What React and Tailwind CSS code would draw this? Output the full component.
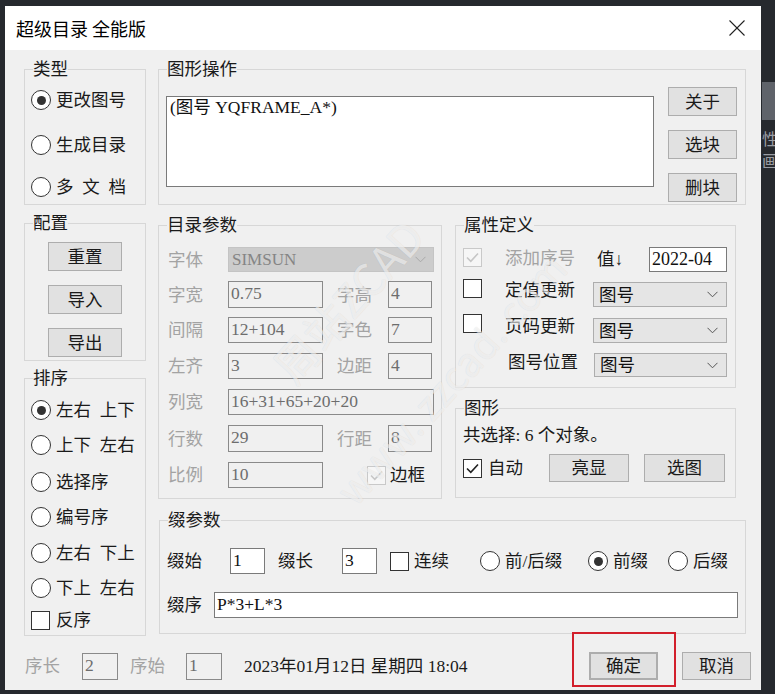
import React from "react";

const Group = ({ title, className = "", children }) => (
  <fieldset className={"border border-[#d7d7d7] min-w-0 " + className}>
    <legend className="ml-[8px] text-[17.5px] leading-[20px] text-[#1a1a1a]">{title}</legend>
    {children}
  </fieldset>
);

const Btn = ({ children, className = "" }) => (
  <div className={"flex items-center justify-center bg-[#e1e1e1] border border-[#adadad] text-[17.5px] leading-[20px] text-[#1a1a1a] shrink-0 " + className}>
    {children}
  </div>
);

const Radio = ({ checked, label, className = "" }) => (
  <div className={"flex items-center h-[20px] " + className}>
    <span className="w-[20px] h-[20px] rounded-full border border-[#333] bg-white flex items-center justify-center shrink-0">
      {checked && <span className="w-[9px] h-[9px] rounded-full bg-[#333]" />}
    </span>
    <span className="ml-[5px] text-[17.5px] leading-[20px] whitespace-nowrap">{label}</span>
  </div>
);

const Check = ({ checked, disabled, className = "" }) => (
  <span
    className={
      (disabled ? "border-[#c9c9c9] bg-[#f6f6f6] " : "border-[#333] bg-white ") +
      "w-[19px] h-[19px] border flex items-center justify-center shrink-0 " +
      className
    }
  >
    {checked && (
      <svg width="15" height="15" viewBox="0 0 15 15">
        <polyline points="2,7.5 5.8,11.3 13,3.5" fill="none" stroke={disabled ? "#c6c6c6" : "#222"} strokeWidth="1.6" />
      </svg>
    )}
  </span>
);

const Field = ({ value, white, className = "" }) => (
  <div
    className={
      "border pl-[2px] pt-[1px] text-[17.5px] leading-[20px] whitespace-nowrap overflow-hidden shrink-0 " +
      (white ? "bg-white border-[#7a7a7a] text-[#111] " : "bg-[#f0f0f0] border-[#8a8a8a] text-[#6d6d6d] ") +
      className
    }
  >
    {value}
  </div>
);

const Chevron = ({ color = "#444" }) => (
  <svg width="11" height="7" viewBox="0 0 11 7">
    <polyline points="0.5,0.8 5.5,5.8 10.5,0.8" fill="none" stroke={color} strokeWidth="1" />
  </svg>
);

const Select = ({ value, className = "" }) => (
  <div className={"flex items-center justify-between bg-[#e5e5e5] border border-[#adadad] pl-[5px] pr-[8px] shrink-0 " + className}>
    <span className="text-[17.5px] leading-[20px] text-[#111]">{value}</span>
    <Chevron color="#555" />
  </div>
);

const Gray = ({ children, className = "" }) => (
  <span className={"text-[17.5px] leading-[20px] text-[#a3a3a3] whitespace-nowrap shrink-0 " + className}>{children}</span>
);

const Label = ({ children, className = "" }) => (
  <span className={"text-[17.5px] leading-[20px] text-[#1a1a1a] whitespace-nowrap shrink-0 " + className}>{children}</span>
);

export default function App() {
  return (
    <div className="relative w-[775px] h-[694px] overflow-hidden bg-[#26292e] pt-[6px] pl-[5px] font-['Liberation_Serif','Noto_Sans_CJK_SC',serif] text-[#1a1a1a]">
      {/* background app bits */}
      <div className="absolute left-[762px] top-[82px] w-[13px] h-[38px] bg-[#5f636a]" />
      <div className="absolute left-[762px] top-[128px] text-[16px] leading-[20px] text-[#9a9da3] font-['Noto_Sans_CJK_SC',sans-serif]">性</div>
      <div className="absolute left-[762px] top-[150px] text-[16px] leading-[20px] text-[#9a9da3] font-['Noto_Sans_CJK_SC',sans-serif]">画</div>

      <div className="w-[756px] h-[684px] flex flex-col bg-[#f0f0f0]">
        {/* title bar */}
        <div className="h-[44px] bg-white flex items-center justify-between pl-[11px] pr-[16px] shrink-0">
          <span className="font-['Noto_Sans_CJK_SC',sans-serif] text-[18px] leading-[24px] text-black">超级目录 全能版</span>
          <svg width="16" height="16" viewBox="0 0 16 16">
            <line x1="0.5" y1="0.5" x2="15.5" y2="15.5" stroke="#222" strokeWidth="1.1" />
            <line x1="15.5" y1="0.5" x2="0.5" y2="15.5" stroke="#222" strokeWidth="1.1" />
          </svg>
        </div>

        {/* body */}
        <div className="flex-1 flex flex-col">
          <div className="flex pl-[19px] pt-[9px]">
            {/* left column */}
            <div className="w-[122px] flex flex-col shrink-0">
              <Group title="类型" className="h-[146px]">
                <div className="flex flex-col pl-[6px]">
                  <Radio checked label="更改图号" className="mt-[11px]" />
                  <Radio label="生成目录" className="mt-[25px]" />
                  <Radio label={"多\u2002文\u2002档"} className="mt-[22px]" />
                </div>
              </Group>
              <Group title="配置" className="h-[148px] mt-[8px]">
                <div className="flex flex-col pl-[23px]">
                  <Btn className="w-[74px] h-[29px] mt-[9px]">重置</Btn>
                  <Btn className="w-[74px] h-[29px] mt-[14px]">导入</Btn>
                  <Btn className="w-[74px] h-[29px] mt-[14px]">导出</Btn>
                </div>
              </Group>
              <Group title="排序" className="h-[268px] mt-[7px]">
                <div className="flex flex-col pl-[6px]">
                  <Radio checked label={"左右\u2002上下"} className="mt-[12px]" />
                  <Radio label={"上下\u2002左右"} className="mt-[15px]" />
                  <Radio label="选择序" className="mt-[17px]" />
                  <Radio label="编号序" className="mt-[15px]" />
                  <Radio label={"左右\u2002下上"} className="mt-[16px]" />
                  <Radio label={"下上\u2002左右"} className="mt-[15px]" />
                  <div className="flex items-center h-[20px] mt-[12px]">
                    <Check />
                    <Label className="ml-[6px]">反序</Label>
                  </div>
                </div>
              </Group>
            </div>

            {/* right area */}
            <div className="ml-[12px] w-[588px] flex flex-col shrink-0">
              <Group title="图形操作" className="h-[146px]">
                <div className="flex pl-[7px]">
                  <div className="w-[488px] h-[91px] mt-[17px] bg-white border border-[#7a7a7a] pl-[3px] text-[17.5px] leading-[20px] text-[#111] whitespace-nowrap shrink-0">
                    (图号 YQFRAME_A*)
                  </div>
                  <div className="ml-[14px] mt-[8px] flex flex-col gap-[14px]">
                    <Btn className="w-[69px] h-[29px]">关于</Btn>
                    <Btn className="w-[69px] h-[29px]">选块</Btn>
                    <Btn className="w-[69px] h-[29px]">删块</Btn>
                  </div>
                </div>
              </Group>

              <div className="flex mt-[10px]">
                <Group title="目录参数" className="w-[284px] h-[284px] shrink-0">
                  <div className="flex flex-col pl-[9px]">
                    <div className="flex items-center h-[25px] mt-[12px]">
                      <Gray className="w-[60px]">字体</Gray>
                      <div className="w-[206px] h-[25px] flex items-center justify-between bg-[#cccccc] border border-[#c4c4c4] pl-[3px] pr-[7px]">
                        <span className="text-[17px] leading-[20px] text-[#858585]">SIMSUN</span>
                        <Chevron color="#a8a8a8" />
                      </div>
                    </div>
                    <div className="flex items-center h-[27px] mt-[9px]">
                      <Gray className="w-[60px]">字宽</Gray>
                      <Field value="0.75" className="w-[95px] h-[27px]" />
                      <Gray className="ml-[14px] w-[51px]">字高</Gray>
                      <Field value="4" className="w-[44px] h-[27px]" />
                    </div>
                    <div className="flex items-center h-[26px] mt-[9px]">
                      <Gray className="w-[60px]">间隔</Gray>
                      <Field value="12+104" className="w-[95px] h-[26px]" />
                      <Gray className="ml-[14px] w-[51px]">字色</Gray>
                      <Field value="7" className="w-[44px] h-[26px]" />
                    </div>
                    <div className="flex items-center h-[26px] mt-[10px]">
                      <Gray className="w-[60px]">左齐</Gray>
                      <Field value="3" className="w-[95px] h-[26px]" />
                      <Gray className="ml-[14px] w-[51px]">边距</Gray>
                      <Field value="4" className="w-[44px] h-[26px]" />
                    </div>
                    <div className="flex items-center h-[26px] mt-[10px]">
                      <Gray className="w-[60px]">列宽</Gray>
                      <Field value="16+31+65+20+20" className="w-[206px] h-[26px]" />
                    </div>
                    <div className="flex items-center h-[27px] mt-[10px]">
                      <Gray className="w-[60px]">行数</Gray>
                      <Field value="29" className="w-[95px] h-[27px]" />
                      <Gray className="ml-[14px] w-[51px]">行距</Gray>
                      <Field value="8" className="w-[44px] h-[27px]" />
                    </div>
                    <div className="flex items-center h-[26px] mt-[10px]">
                      <Gray className="w-[60px]">比例</Gray>
                      <Field value="10" className="w-[95px] h-[26px]" />
                      <Check checked disabled className="ml-[44px]" />
                      <Label className="ml-[4px]">边框</Label>
                    </div>
                  </div>
                </Group>

                <div className="ml-[13px] w-[281px] flex flex-col shrink-0">
                  <Group title="属性定义" className="h-[173px]">
                    <div className="flex flex-col pl-[7px]">
                      <div className="flex items-start h-[25px] mt-[12px]">
                        <Check checked disabled className="mt-[1px]" />
                        <Gray className="ml-[23px] w-[92px] mt-[1px]">添加序号</Gray>
                        <Label className="w-[52px] mt-[2px]">值↓</Label>
                        <div className="w-[78px] h-[25px] bg-white border border-[#7a7a7a] pl-[2px] text-[18px] leading-[22px] text-[#111]">2022-04</div>
                      </div>
                      <div className="flex items-start h-[25px] mt-[10px]">
                        <Check className="mt-[-3px]" />
                        <Label className="ml-[23px] w-[88px] mt-[-2px]">定值更新</Label>
                        <Select value="图号" className="w-[134px] h-[25px]" />
                      </div>
                      <div className="flex items-start h-[25px] mt-[11px]">
                        <Check className="mt-[-4px]" />
                        <Label className="ml-[23px] w-[88px] mt-[-2px]">页码更新</Label>
                        <Select value="图号" className="w-[134px] h-[25px]" />
                      </div>
                      <div className="flex items-start h-[24px] mt-[10px]">
                        <span className="w-[19px] shrink-0" />
                        <Label className="ml-[26px] w-[86px] mt-[-1px]">图号位置</Label>
                        <Select value="图号" className="w-[133px] h-[24px]" />
                      </div>
                    </div>
                  </Group>

                  <Group title="图形" className="h-[100px] mt-[10px]">
                    <div className="flex flex-col pl-[7px]">
                      <Label className="mt-[7px] h-[20px]">共选择: 6 个对象。</Label>
                      <div className="flex items-center h-[28px] mt-[9px]">
                        <Check checked />
                        <Label className="ml-[6px] w-[61px]">自动</Label>
                        <Btn className="w-[80px] h-[28px]">亮显</Btn>
                        <Btn className="w-[81px] h-[28px] ml-[15px]">选图</Btn>
                      </div>
                    </div>
                  </Group>
                </div>
              </div>

              <Group title="缀参数" className="w-[587px] h-[124px] ml-[1px] mt-[11px]">
                <div className="flex flex-col pl-[7px]">
                  <div className="flex items-center h-[26px] mt-[18px]">
                    <Label className="w-[63px]">缀始</Label>
                    <Field white value="1" className="w-[35px] h-[26px]" />
                    <Label className="ml-[13px] w-[64px]">缀长</Label>
                    <Field white value="3" className="w-[35px] h-[26px]" />
                    <Check className="ml-[13px]" />
                    <Label className="ml-[5px] w-[66px]">连续</Label>
                    <Radio label="前/后缀" className="w-[108px]" />
                    <Radio checked label="前缀" className="w-[80px]" />
                    <Radio label="后缀" />
                  </div>
                  <div className="flex items-center h-[26px] mt-[18px]">
                    <Label className="w-[47px]">缀序</Label>
                    <Field white value="P*3+L*3" className="w-[524px] h-[26px]" />
                  </div>
                </div>
              </Group>
            </div>
          </div>

          {/* bottom row */}
          <div className="flex items-center h-[28px] mt-[16px] pl-[20px] pr-[10px]">
            <Gray className="w-[57px]">序长</Gray>
            <Field value="2" className="w-[36px] h-[27px]" />
            <Gray className="ml-[12px] w-[56px]">序始</Gray>
            <Field value="1" className="w-[36px] h-[27px]" />
            <Label className="ml-[22px]">2023年01月12日 星期四 18:04</Label>
            <div className="flex-1" />
            <Btn className="w-[69px] h-[28px] border-2 border-[#0078d7]">确定</Btn>
            <Btn className="w-[69px] h-[28px] ml-[24px]">取消</Btn>
          </div>
        </div>
      </div>

      {/* watermark */}
      <div className="pointer-events-none absolute left-[347px] top-[300px] -translate-x-1/2 -translate-y-1/2 -rotate-[48deg] whitespace-nowrap text-[44px] leading-[50px] text-white/60 [text-shadow:0_0_1px_rgba(0,0,0,0.12)] font-['Noto_Sans_CJK_SC',sans-serif]">
        周站ZCAD
      </div>
      <div className="pointer-events-none absolute left-[450px] top-[378px] -translate-x-1/2 -translate-y-1/2 -rotate-[48deg] whitespace-nowrap text-[40px] leading-[46px] text-white/60 [text-shadow:0_0_1px_rgba(0,0,0,0.12)] font-['Noto_Sans_CJK_SC',sans-serif]">
        www. zzcad. com
      </div>

      {/* red annotation box */}
      <div className="pointer-events-none absolute left-[572px] top-[632px] w-[104px] h-[55px] border-2 border-[#d21f2b]" />
    </div>
  );
}
